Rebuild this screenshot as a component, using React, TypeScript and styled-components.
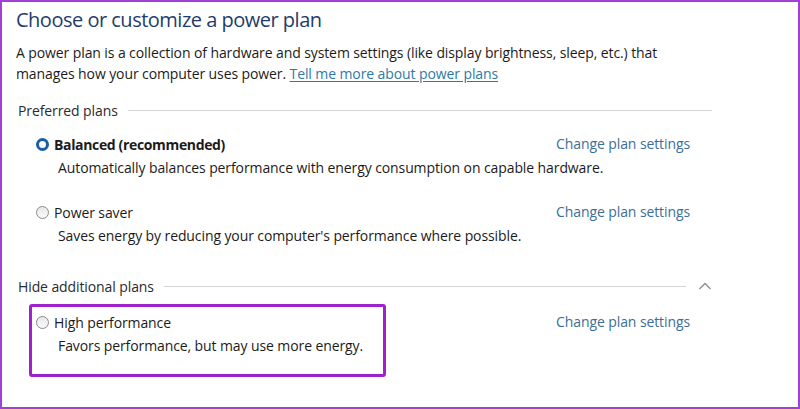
import React from 'react';
import styled, { createGlobalStyle } from 'styled-components';

const GlobalStyle = createGlobalStyle`
  html, body {
    margin: 0;
    padding: 0;
    background: #ffffff;
  }
  body {
    font-family: "Open Sans", "Noto Sans", "Liberation Sans", sans-serif;
    color: #1b1b1b;
    letter-spacing: -0.1px;
  }
`;

const Frame = styled.div`
  box-sizing: border-box;
  width: 800px;
  height: 409px;
  border: 2px solid #a23fd4;
  padding: 4px 86px 0 14px;
  background: #fff;
`;

const Title = styled.h1`
  margin: 0;
  font-size: 20px;
  line-height: 28px;
  font-weight: 400;
  letter-spacing: -0.5px;
  color: #1f3d6c;
`;

const Intro = styled.p`
  margin: 8px 0 0;
  font-size: 14px;
  line-height: 21px;
  color: #1b1b1b;
  white-space: nowrap;
`;

const Link = styled.a`
  color: #2d7aa8;
  text-decoration: underline;
  text-underline-offset: 2px;
  cursor: pointer;
`;

const SectionHeader = styled.div<{ $top: number }>`
  display: flex;
  align-items: center;
  gap: 10px;
  margin-top: ${p => p.$top}px;
  padding-left: 2px;
  height: 20px;
  font-size: 14px;
  color: #2b2b2b;
`;

const Rule = styled.div`
  flex: 1;
  height: 1px;
  background: #d4d4d4;
`;

const Chevron = styled.svg`
  flex: none;
  margin-left: 2px;
  width: 14px;
  height: 10px;
`;

const Plan = styled.div<{ $top: number }>`
  position: relative;
  display: grid;
  grid-template-columns: minmax(0, 1fr) auto;
  margin-top: ${p => p.$top}px;
  padding: 0 22px 0 20px;
`;

const PlanName = styled.label<{ $bold?: boolean }>`
  display: flex;
  align-items: center;
  gap: 5px;
  height: 20px;
  font-size: 14px;
  font-weight: ${p => (p.$bold ? 700 : 400)};
  letter-spacing: ${p => (p.$bold ? '-0.35px' : '-0.1px')};
  color: #1b1b1b;
`;

const Radio = styled.span<{ $checked?: boolean }>`
  box-sizing: border-box;
  flex: none;
  width: 13px;
  height: 13px;
  border-radius: 50%;
  ${p =>
    p.$checked
      ? `border: 3.5px solid #1a5fa6; background: #fff;`
      : `border: 1px solid #8a8a8a; background: linear-gradient(#e8e8e8, #fafafa);`}
`;

const PlanDesc = styled.div`
  grid-column: 1 / 3;
  margin-top: 4px;
  padding-left: 22px;
  height: 20px;
  line-height: 20px;
  font-size: 14px;
  white-space: nowrap;
  color: #1b1b1b;
`;

const ChangeLink = styled.a`
  grid-column: 2 / 3;
  grid-row: 1 / 2;
  height: 20px;
  line-height: 20px;
  font-size: 14px;
  white-space: nowrap;
  color: #3b6e96;
  cursor: pointer;
`;

const Highlight = styled.div`
  position: absolute;
  top: -8px;
  left: 13px;
  width: 357px;
  height: 73px;
  box-sizing: border-box;
  border: 3px solid #a020cc;
  border-radius: 3px;
  pointer-events: none;
`;

type PlanProps = {
  name: string;
  desc: string;
  top: number;
  checked?: boolean;
  highlight?: boolean;
};

function PowerPlan({ name, desc, top, checked, highlight }: PlanProps) {
  return (
    <Plan $top={top}>
      <PlanName $bold={checked}>
        <Radio $checked={checked} />
        {name}
      </PlanName>
      <ChangeLink>Change plan settings</ChangeLink>
      <PlanDesc>{desc}</PlanDesc>
      {highlight && <Highlight />}
    </Plan>
  );
}

export default function App() {
  return (
    <>
      <GlobalStyle />
      <Frame>
        <Title>Choose or customize a power plan</Title>
        <Intro>
          A power plan is a collection of hardware and system settings (like display brightness, sleep, etc.) that
          <br />
          manages how your computer uses power. <Link>Tell me more about power plans</Link>
        </Intro>

        <SectionHeader $top={16}>
          Preferred plans
          <Rule />
        </SectionHeader>
        <PowerPlan
          top={14}
          checked
          name="Balanced (recommended)"
          desc="Automatically balances performance with energy consumption on capable hardware."
        />
        <PowerPlan
          top={24}
          name="Power saver"
          desc="Saves energy by reducing your computer's performance where possible."
        />

        <SectionHeader $top={30}>
          Hide additional plans
          <Rule />
          <Chevron viewBox="0 0 14 10">
            <path d="M1.5 8 L7 2.5 L12.5 8" fill="none" stroke="#8c8c8c" strokeWidth="1.3" />
          </Chevron>
        </SectionHeader>
        <PowerPlan
          top={16}
          highlight
          name="High performance"
          desc="Favors performance, but may use more energy."
        />
      </Frame>
    </>
  );
}
